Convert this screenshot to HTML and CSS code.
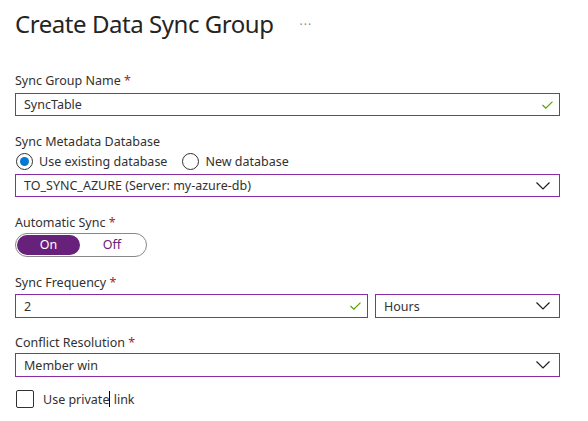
FILE: index.html
```html
<!DOCTYPE html>
<html lang="en">
<head>
  <meta charset="UTF-8">
  <title>Create Data Sync Group</title>
  <link rel="stylesheet" href="styles.css">
</head>
<body>

<div class="page">
  <!-- Header -->
  <div class="header">
    <h1>Create Data Sync Group</h1>
    <span class="more">&middot;&middot;&middot;</span>
  </div>

  <!-- Sync group name -->
  <div class="form-group first">
    <label>Sync Group Name <span class="req">*</span></label>
    <div class="field">
      <span class="value">SyncTable</span>
      <svg class="check" width="11" height="8" viewBox="0 0 11 8"><path d="M0.5 4 L3.8 7.2 L10.5 0.6" fill="none" stroke="#57a300" stroke-width="1.2"/></svg>
    </div>
  </div>

  <!-- Metadata database -->
  <div class="form-group">
    <label>Sync Metadata Database</label>
    <div class="radio-row">
      <span class="radio checked"><span class="dot"></span></span>
      <span class="radio-label">Use existing database</span>
      <span class="radio"></span>
      <span class="radio-label">New database</span>
    </div>
    <div class="field select">
      <span class="value">TO_SYNC_AZURE (Server: my-azure-db)</span>
      <svg class="chevron" width="14" height="8" viewBox="0 0 14 8"><path d="M0.5 0.5 L7 7 L13.5 0.5" fill="none" stroke="#201f1e" stroke-width="1.2"/></svg>
    </div>
  </div>

  <!-- Automatic sync -->
  <div class="form-group">
    <label>Automatic Sync <span class="req">*</span></label>
    <div class="toggle">
      <span class="opt on">On</span>
      <span class="opt">Off</span>
    </div>
  </div>

  <!-- Frequency -->
  <div class="form-group freq-group">
    <label>Sync Frequency <span class="req">*</span></label>
    <div class="freq-row">
      <div class="field freq">
        <span class="value">2</span>
        <svg class="check" width="11" height="8" viewBox="0 0 11 8"><path d="M0.5 4 L3.8 7.2 L10.5 0.6" fill="none" stroke="#57a300" stroke-width="1.2"/></svg>
      </div>
      <div class="field select unit">
        <span class="value">Hours</span>
        <svg class="chevron" width="14" height="8" viewBox="0 0 14 8"><path d="M0.5 0.5 L7 7 L13.5 0.5" fill="none" stroke="#201f1e" stroke-width="1.2"/></svg>
      </div>
    </div>
  </div>

  <!-- Conflict resolution -->
  <div class="form-group conflict-group">
    <label>Conflict Resolution <span class="req">*</span></label>
    <div class="field select">
      <span class="value">Member win</span>
      <svg class="chevron" width="14" height="8" viewBox="0 0 14 8"><path d="M0.5 0.5 L7 7 L13.5 0.5" fill="none" stroke="#201f1e" stroke-width="1.2"/></svg>
    </div>
  </div>

  <div class="checkbox-row">
    <span class="checkbox"></span>
    <span class="checkbox-label">Use private<span class="caret"></span> link</span>
  </div>
</div>

</body>
</html>
```

FILE: styles.css
```css
* { box-sizing: border-box; }

body {
  margin: 0;
  font-family: "Noto Sans", "Open Sans", sans-serif;
  color: #323130;
  background: #fff;
}

.page {
  width: 560px;
  padding-left: 15px;
}

.header {
  display: flex;
  align-items: center;
  gap: 26px;
  padding-top: 6px;
  height: 42px;
}

h1 {
  margin: 0;
  font-size: 24px;
  font-weight: 400;
  line-height: 34px;
  color: #252423;
  letter-spacing: -0.45px;
}

.more {
  font-size: 12px;
  color: #8a8886;
  letter-spacing: 1px;
  margin-top: 0;
}

.form-group {
  margin-top: 17px;
}

.form-group.first {
  margin-top: 30px;
}

label {
  display: block;
  font-size: 12.5px;
  line-height: 17px;
  margin-bottom: 4px;
}

.req {
  color: #a4262c;
}

.field {
  position: relative;
  display: flex;
  align-items: center;
  height: 23px;
  border: 1px solid #8a2ba6;
  padding: 0 10px 0 8px;
  font-size: 12.5px;
  color: #323130;
}

.field .value {
  flex: 1;
}

.check {
  margin-right: -4px;
}

.chevron {
  margin-right: -1px;
}

.radio-row {
  display: flex;
  align-items: center;
  height: 18px;
  margin-top: -2px;
  margin-bottom: 4px;
  font-size: 12.5px;
}

.radio {
  width: 17px;
  height: 17px;
  border: 1px solid #323130;
  border-radius: 50%;
  display: flex;
  align-items: center;
  justify-content: center;
  margin-left: 1px;
}

.radio .dot {
  width: 9px;
  height: 9px;
  border-radius: 50%;
  background: #0078d4;
}

.radio-label {
  margin-left: 6px;
  margin-right: 14px;
}

.toggle {
  display: flex;
  align-items: center;
  width: 132px;
  height: 24px;
  border: 1px solid #8a8886;
  border-radius: 12px;
  padding: 0 1px;
  margin-top: -2px;
  font-size: 12.5px;
}

.opt {
  width: 63px;
  height: 20px;
  line-height: 20px;
  text-align: center;
  color: #68217a;
  border-radius: 10px;
}

.opt.on {
  background: #68217a;
  color: #fff;
}

.opt + .opt {
  margin-left: 12px;
  width: 40px;
}

.freq-row {
  display: flex;
  gap: 7px;
}

.field.freq {
  width: 353px;
  height: 24px;
}

.field.unit {
  flex: 1;
  height: 24px;
}

.freq-group label { margin-bottom: 3px; }
.conflict-group { margin-top: 16px; }
.conflict-group label { margin-bottom: 2px; }
.conflict-group .field { height: 24px; }

.checkbox-row {
  display: flex;
  align-items: center;
  margin-top: 13px;
  font-size: 12.5px;
}

.checkbox {
  width: 18px;
  height: 18px;
  border: 1px solid #323130;
  border-radius: 2px;
  margin-left: 1px;
}

.checkbox-label {
  margin-left: 9px;
}

.caret {
  display: inline-block;
  width: 1px;
  height: 16px;
  background: #000;
  vertical-align: -3px;
}
```
